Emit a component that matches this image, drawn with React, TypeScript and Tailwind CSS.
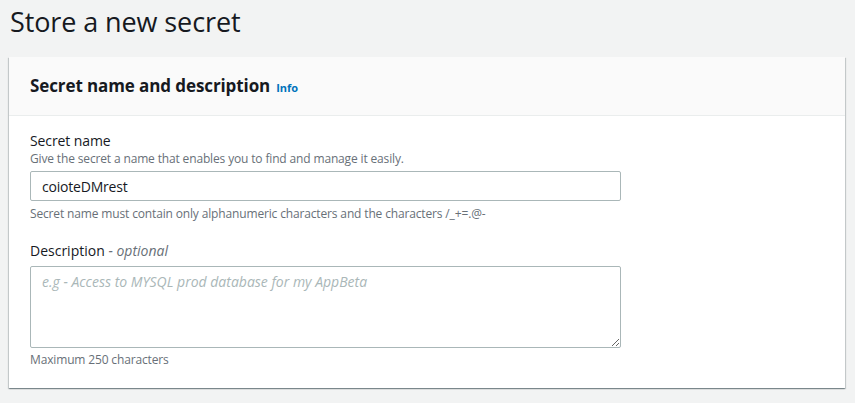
import React from "react";

export default function App() {
  return (
    <div
      className="min-h-[403px] w-full bg-[#f2f3f3] px-[9px] text-[#16191f]"
      style={{ fontFamily: '"Open Sans", "Noto Sans", sans-serif' }}
    >
      <h1 className="pl-[1px] text-[27px] leading-[44px] font-normal tracking-[-0.1px] text-[#16191f]">
        Store a new secret
      </h1>
      <div className="mt-[13px] w-[836px] bg-white shadow-[0_1px_1px_0_rgba(0,28,36,0.3),1px_1px_1px_0_rgba(0,28,36,0.15),-1px_1px_1px_0_rgba(0,28,36,0.15)]">
        <div className="flex items-baseline gap-[6px] border-b border-[#eaeded] bg-[#fafafa] px-[21px] py-[17px]">
          <h2 className="text-[17px] leading-[24px] font-bold tracking-[-0.1px] text-[#16191f]">
            Secret name and description
          </h2>
          <span className="text-[11px] font-bold text-[#0073bb]">Info</span>
        </div>
        <div className="px-[21px] pt-[15px] pb-[20px]">
          <label className="block text-[14px] leading-[20px] tracking-[-0.1px]">Secret name</label>
          <div className="text-[12px] leading-[16px] tracking-[-0.15px] text-[#687078]">
            Give the secret a name that enables you to find and manage it easily.
          </div>
          <input
            readOnly
            value="coioteDMrest"
            className="mt-[4px] block h-[30px] w-[591px] rounded-[2px] border border-[#aab7b8] bg-white px-[11px] text-[14px] tracking-[-0.2px] text-[#16191f] outline-none"
          />
          <div className="mt-[5px] text-[12px] leading-[16px] tracking-[-0.15px] text-[#687078]">
            Secret name must contain only alphanumeric characters and the characters /_+=.@-
          </div>
          <label className="mt-[19px] block text-[14px] leading-[20px]">
            Description <span className="italic text-[#687078]">- optional</span>
          </label>
          <textarea
            placeholder="e.g - Access to MYSQL prod database for my AppBeta"
            className="mt-[5px] block h-[82px] w-[591px] rounded-[2px] border border-[#aab7b8] bg-white px-[11px] py-[4px] text-[14px] leading-[22px] text-[#16191f] outline-none placeholder:italic placeholder:text-[#aab7b8]"
          />
          <div className="mt-[4px] text-[12px] leading-[16px] tracking-[-0.15px] text-[#687078]">
            Maximum 250 characters
          </div>
        </div>
      </div>
    </div>
  );
}
